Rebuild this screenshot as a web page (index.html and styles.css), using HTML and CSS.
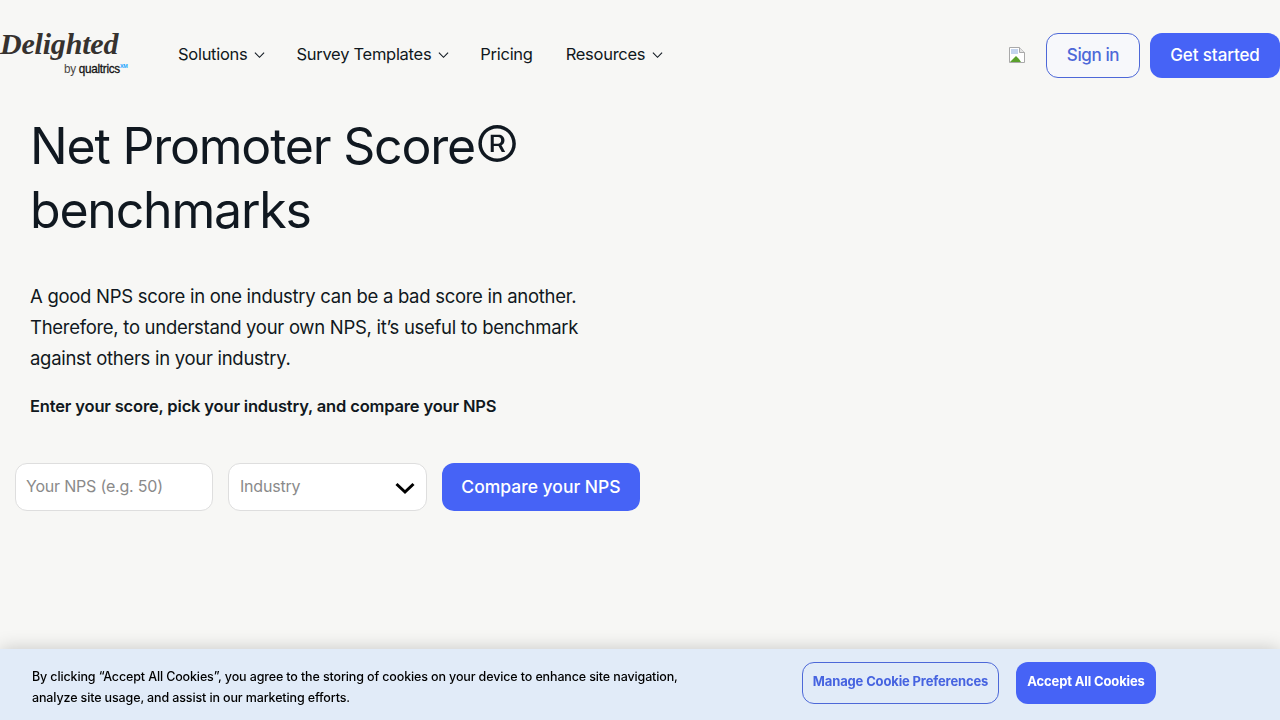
FILE: index.html
```html
<!DOCTYPE html>
<html lang="en">
<head>
<meta charset="utf-8">
<title>Net Promoter Score benchmarks</title>
<link rel="stylesheet" href="styles.css">
</head>
<body>
<header class="site-header">
  <a class="logo" href="#">
    <span class="logo-script">Delighted</span>
    <span class="logo-sub"><span class="logo-by">by</span> <span class="logo-q">qualtrics</span><sup class="logo-xm">XM</sup></span>
  </a>
  <nav class="nav">
    <a class="nav-item" href="#">Solutions <svg class="chev" viewBox="0 0 12 8"><path d="M1 1.5l5 5 5-5"/></svg></a>
    <a class="nav-item" href="#">Survey Templates <svg class="chev" viewBox="0 0 12 8"><path d="M1 1.5l5 5 5-5"/></svg></a>
    <a class="nav-item nav-item-plain" href="#">Pricing</a>
    <a class="nav-item" href="#">Resources <svg class="chev" viewBox="0 0 12 8"><path d="M1 1.5l5 5 5-5"/></svg></a>
  </nav>
  <div class="header-actions">
    <svg class="broken" viewBox="0 0 16 16"><path d="M.5.5h10l5 5v10H.5z" fill="#fff" stroke="#a9a9a9"/><path d="M10.5.5v5h5" fill="#e4e4e4" stroke="#a9a9a9"/><path d="M2 2h7v5H2z" fill="#c4d4ee"/><path d="M1 15l6-6 3 3 2 3z" fill="#5aa02c"/></svg>
    <a class="btn btn-outline" href="#">Sign in</a>
    <a class="btn btn-solid" href="#">Get started</a>
  </div>
</header>
<main class="hero">
  <h1 class="title">Net Promoter Score<span class="reg">®</span> benchmarks</h1>
  <p class="lead">A good NPS score in one industry can be a bad score in another. Therefore, to understand your own NPS, it’s useful to benchmark against others in your industry.</p>
  <p class="prompt">Enter your score, pick your industry, and compare your NPS</p>
  <form class="compare">
    <input class="field field-nps" type="text" placeholder="Your NPS (e.g. 50)">
    <div class="field field-select">
      <span>Industry</span>
      <svg class="select-chev" viewBox="0 0 20 13"><path d="M1.500 2l8.500 8 8.500-8"/></svg>
    </div>
    <button class="compare-btn" type="button">Compare your NPS</button>
  </form>
</main>
<aside class="cookie">
  <p class="cookie-text">By clicking “Accept All Cookies”, you agree to the storing of cookies on your device to enhance site navigation, analyze site usage, and assist in our marketing efforts.</p>
  <div class="cookie-actions">
    <button class="cookie-btn cookie-manage" type="button">Manage Cookie Preferences</button>
    <button class="cookie-btn cookie-accept" type="button">Accept All Cookies</button>
  </div>
</aside>
</body>
</html>
```
FILE: styles.css
```css
* { box-sizing: border-box; }
html, body { margin: 0; height: 720px; overflow: hidden; }
body {
  background: #f7f7f5;
  color: #101820;
  font-family: Inter, "Liberation Sans", sans-serif;
}
a { color: inherit; text-decoration: none; }
.site-header {
  display: flex;
  align-items: center;
  height: 110px;
}
.logo {
  width: 178px;
  height: 50px;
  margin-top: -6px;
  display: flex;
  flex-direction: column;
  color: #36322f;
}
.logo-script {
  font-family: "Liberation Serif", serif;
  font-style: italic;
  font-weight: 700;
  font-size: 30px;
  line-height: 34px;
  letter-spacing: -0.2px;
  width: 118px;
  white-space: nowrap;
}
.logo-sub {
  margin-left: 64px;
  margin-top: 0;
  font-size: 13px;
  line-height: 15px;
  white-space: nowrap;
  font-family: "Liberation Sans", sans-serif;
  letter-spacing: -0.3px;
  transform: scaleX(0.9);
  transform-origin: left center;
}
.logo-by { font-weight: 400; color: #4b4845; }
.logo-q { font-weight: 400; color: #111; -webkit-text-stroke: 0.3px #111; }
.logo-xm { color: #1aa3ff; font-size: 6px; font-weight: 700; line-height: 0; vertical-align: 5px; }
.nav { display: flex; align-items: center; gap: 31px; padding-bottom: 2px; font-size: 16.500px; letter-spacing: -0.28px; }
.nav-item { display: flex; align-items: center; gap: 7px; white-space: nowrap; }
.nav-item-plain { margin-right: 2px; }
.chev { width: 11px; height: 8px; margin-top: 2px; fill: none; stroke: #101820; stroke-width: 1.200; }
.header-actions { margin-left: auto; display: flex; align-items: center; }
.broken { width: 16px; height: 16px; margin-right: 21px; }
.btn {
  display: flex;
  align-items: center;
  justify-content: center;
  height: 45px;
  border-radius: 12px;
  font-size: 17px;
  font-weight: 500;
  letter-spacing: -0.1px;
}
.btn-outline { width: 94px; border: 1px solid #4d68d8; color: #4d68d8; background: #f7f8fb; margin-right: 10px; letter-spacing: -0.4px; }
.btn-solid { width: 130px; background: #4663f6; color: #fff; }
.hero { padding: 4px 30px 0; }
.title {
  margin: 0;
  width: 560px;
  font-size: 50px;
  line-height: 64px;
  font-weight: 400;
  letter-spacing: -1.200px;
}
.reg { font-size: 66px; font-weight: 300; line-height: 0; vertical-align: -9px; letter-spacing: 0; }
.lead {
  margin: 39px 0 0;
  width: 590px;
  font-size: 18.500px;
  line-height: 31px;
  letter-spacing: -0.29px;
}
.prompt {
  margin: 20px 0 0;
  font-size: 16.500px;
  line-height: 24px;
  font-weight: 600;
  letter-spacing: -0.16px;
}
.compare { display: flex; gap: 15px; margin: 45px 0 0 -15px; }
.field {
  height: 48px;
  background: #fff;
  border: 1px solid #dedede;
  border-radius: 12px;
  font-family: inherit;
  font-size: 16px;
  letter-spacing: -0.2px;
  color: #8a8a8a;
}
.field::placeholder { color: #8a8a8a; opacity: 1; }
.field-nps { width: 198px; padding: 0 10px 2px; }
.field-select {
  width: 199px;
  display: flex;
  align-items: center;
  justify-content: space-between;
  padding: 0 11px 2px;
}
.select-chev { width: 20px; height: 13px; margin-top: 5px; fill: none; stroke: #000; stroke-width: 3; }
.compare-btn {
  width: 198px;
  height: 48px;
  border: 0;
  border-radius: 12px;
  background: #4663f6;
  color: #fff;
  font-family: inherit;
  font-size: 17.500px;
  font-weight: 500;
  padding: 0 0 2px;
}
.cookie {
  position: fixed;
  left: 0;
  right: 0;
  bottom: 0;
  height: 71px;
  background: #e1ebf8;
  box-shadow: 0 0 18px rgba(0, 0, 0, 0.2);
  display: flex;
  align-items: center;
  padding-left: 32px;
}
.cookie-text {
  margin: 0;
  width: 660px;
  padding-top: 4px;
  font-size: 12.500px;
  line-height: 21px;
  font-weight: 500;
  color: #000;
  letter-spacing: -0.13px;
}
.cookie-actions { display: flex; gap: 17px; margin-left: 110px; margin-top: -4px; }
.cookie-btn {
  height: 42px;
  border-radius: 12px;
  font-family: inherit;
  font-size: 13px;
  font-weight: 700;
  letter-spacing: -0.15px;
  padding: 0 0 4px;
}
.cookie-manage { width: 197px; border: 1px solid #4d68d8; background: transparent; color: #4663e0; }
.cookie-accept { width: 140px; border: 0; background: #4663f6; color: #fff; }
```
